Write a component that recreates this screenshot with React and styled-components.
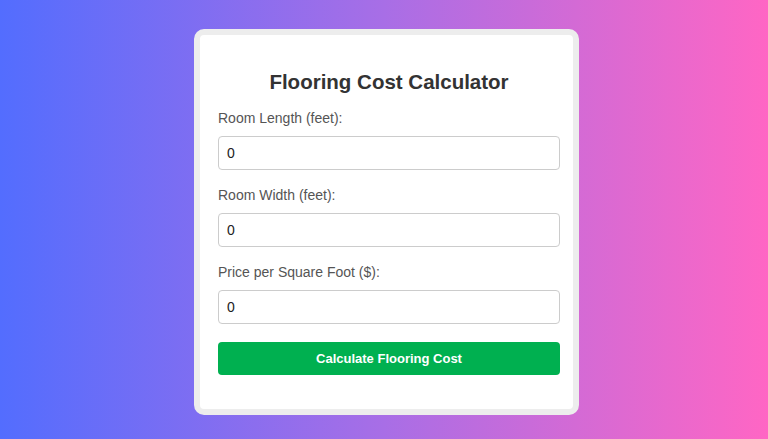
import React, { useState } from 'react';
import styled, { createGlobalStyle } from 'styled-components';

const GlobalStyle = createGlobalStyle`
  html, body {
    margin: 0;
    padding: 0;
  }
  body {
    font-family: "Liberation Sans", Arial, sans-serif;
  }
`;

const Page = styled.div`
  min-height: 100vh;
  box-sizing: border-box;
  display: flex;
  align-items: center;
  justify-content: center;
  padding: 4px 0 0 5px;
  background: linear-gradient(to right, #536dfe, #a86ee6 50%, #ff66c4);
`;

const Card = styled.div`
  width: 385px;
  box-sizing: border-box;
  background: #ffffff;
  border: 6px solid #ededed;
  border-radius: 10px;
  padding: 35px 13px 34px 18px;
`;

const Title = styled.h2`
  margin: 0 0 15px;
  font-size: 20.5px;
  line-height: 24px;
  font-weight: 700;
  color: #333333;
  text-align: center;
`;

const Field = styled.div`
  display: flex;
  flex-direction: column;
  margin-bottom: ${(p) => p.gap || '16px'};
`;

const Label = styled.label`
  font-size: 14px;
  line-height: 18px;
  color: #555555;
  margin-bottom: 9px;
`;

const Input = styled.input`
  box-sizing: border-box;
  width: 100%;
  height: 34px;
  padding: 0 8px;
  border: 1px solid #cccccc;
  border-radius: 4px;
  font-family: "Liberation Sans", Arial, sans-serif;
  font-size: 14px;
  color: #222222;
  background: #ffffff;
  outline: none;
`;

const Button = styled.button`
  width: 100%;
  height: 33px;
  border: none;
  border-radius: 4px;
  background: #00b050;
  color: #ffffff;
  font-family: "Liberation Sans", Arial, sans-serif;
  font-size: 13px;
  font-weight: 700;
  cursor: pointer;
`;

const fields = [
  { id: 'length', label: 'Room Length (feet):' },
  { id: 'width', label: 'Room Width (feet):' },
  { id: 'price', label: 'Price per Square Foot ($):' },
];

const App = () => {
  const [values, setValues] = useState({ length: '0', width: '0', price: '0' });

  return (
    <>
      <GlobalStyle />
      <Page>
        <Card>
          <Title>Flooring Cost Calculator</Title>
          {fields.map((f, i) => (
            <Field key={f.id} gap={i === fields.length - 1 ? '18px' : '16px'}>
              <Label htmlFor={f.id}>{f.label}</Label>
              <Input
                id={f.id}
                type="number"
                value={values[f.id]}
                onChange={(e) => setValues({ ...values, [f.id]: e.target.value })}
              />
            </Field>
          ))}
          <Button>Calculate Flooring Cost</Button>
        </Card>
      </Page>
    </>
  );
};

export default App;
